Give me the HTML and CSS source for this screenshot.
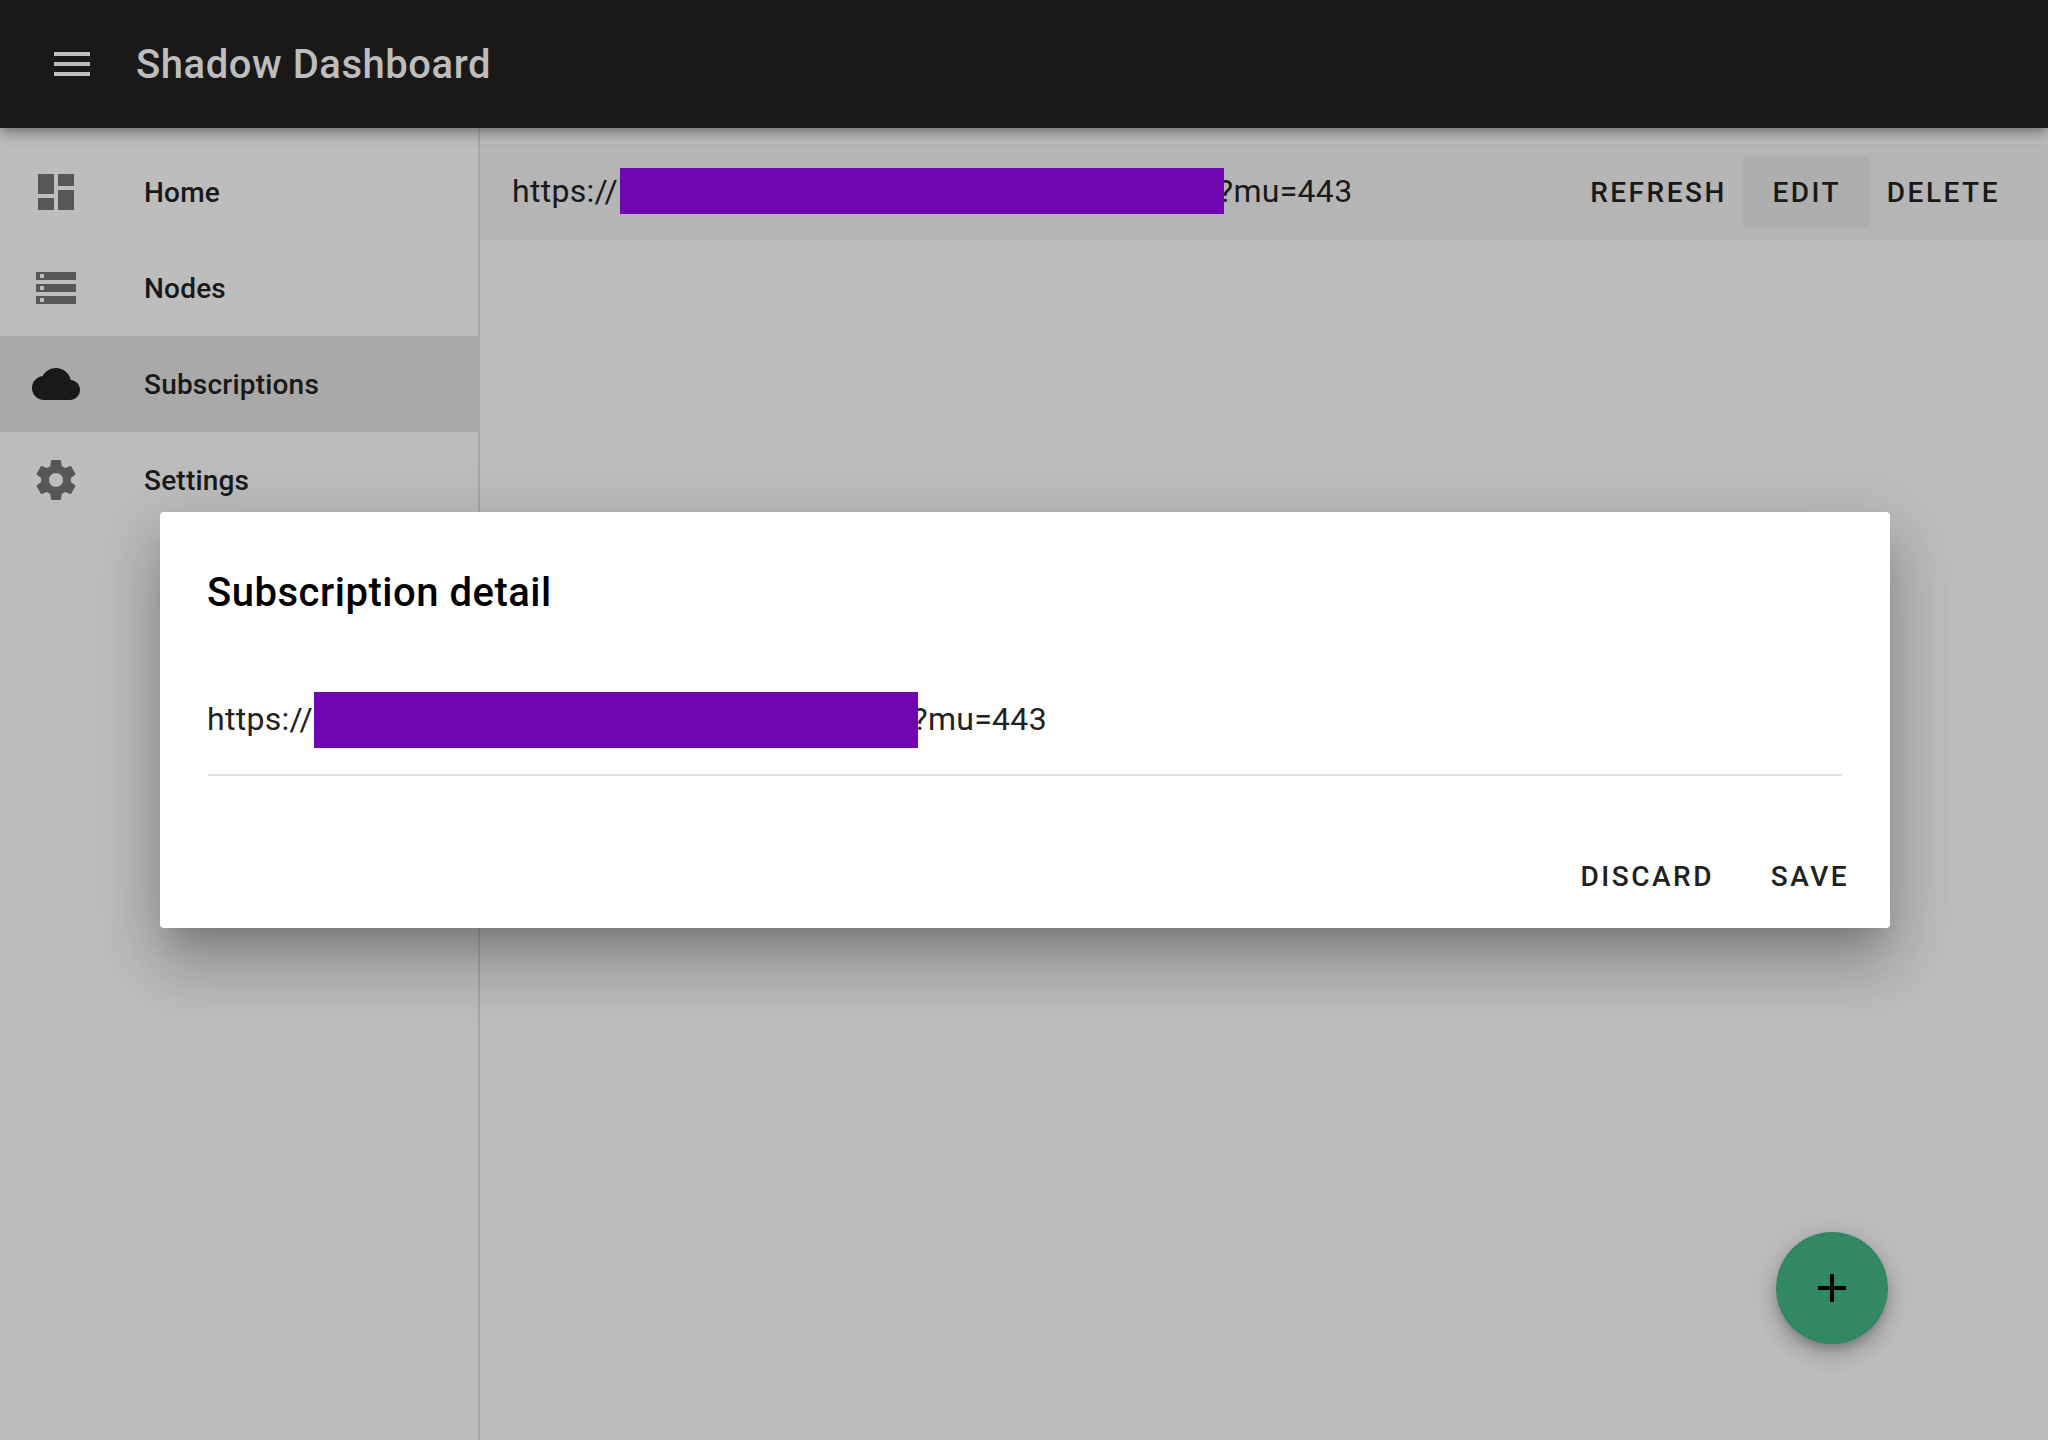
FILE: index.html
```html
<!DOCTYPE html>
<html lang="en">
<head>
<meta charset="utf-8">
<title>Shadow Dashboard</title>
<link rel="stylesheet" href="styles.css">
</head>
<body>
<header class="app-bar">
  <svg class="icon" viewBox="0 0 24 24"><path d="M3 18h18v-2H3v2zm0-5h18v-2H3v2zm0-7v2h18V6H3z"/></svg>
  <h1 class="app-title">Shadow Dashboard</h1>
</header>
<div class="shell">
  <nav class="drawer">
    <a class="nav-item"><svg class="icon" viewBox="0 0 24 24"><path d="M3 13h8V3H3v10zm0 8h8v-6H3v6zm10 0h8V11h-8v10zm0-18v6h8V3h-8z"/></svg><span>Home</span></a>
    <a class="nav-item"><svg class="icon" viewBox="0 0 24 24"><path d="M2 20h20v-4H2v4zm2-3h2v2H4v-2zM2 4v4h20V4H2zm4 3H4V5h2v2zm-4 7h20v-4H2v4zm2-3h2v2H4v-2z"/></svg><span>Nodes</span></a>
    <a class="nav-item active"><svg class="icon" viewBox="0 0 24 24"><path d="M19.35 10.04C18.67 6.59 15.64 4 12 4 9.11 4 6.6 5.64 5.35 8.04 2.34 8.36 0 10.91 0 14c0 3.31 2.69 6 6 6h13c2.76 0 5-2.24 5-5 0-2.64-2.05-4.78-4.65-4.96z"/></svg><span>Subscriptions</span></a>
    <a class="nav-item"><svg class="icon" viewBox="0 0 24 24"><path d="M19.43 12.98c.04-.32.07-.64.07-.98s-.03-.66-.07-.98l2.11-1.65c.19-.15.24-.42.12-.64l-2-3.46c-.12-.22-.39-.3-.61-.22l-2.49 1c-.52-.4-1.08-.73-1.69-.98l-.38-2.65C14.46 2.18 14.25 2 14 2h-4c-.25 0-.46.18-.49.42l-.38 2.65c-.61.25-1.17.59-1.69.98l-2.49-1c-.23-.09-.49 0-.61.22l-2 3.46c-.13.22-.07.49.12.64l2.11 1.65c-.04.32-.07.65-.07.98s.03.66.07.98l-2.11 1.65c-.19.15-.24.42-.12.64l2 3.46c.12.22.39.3.61.22l2.49-1c.52.4 1.08.73 1.69.98l.38 2.65c.03.24.24.42.49.42h4c.25 0 .46-.18.49-.42l.38-2.65c.61-.25 1.17-.59 1.69-.98l2.49 1c.23.09.49 0 .61-.22l2-3.46c.12-.22.07-.49-.12-.64l-2.11-1.65zM12 15.5c-1.93 0-3.5-1.57-3.5-3.5s1.57-3.5 3.5-3.5 3.5 1.57 3.5 3.5-1.57 3.5-3.5 3.5z"/></svg><span>Settings</span></a>
  </nav>
  <main class="content">
    <div class="row">
      <div class="url"><span class="scheme">https://</span><span class="mask"></span><span class="query">?mu=443</span></div>
      <div class="row-actions">
        <button class="btn">REFRESH</button>
        <button class="btn focused">EDIT</button>
        <button class="btn">DELETE</button>
      </div>
    </div>
  </main>
</div>
<button class="fab"><svg class="icon" viewBox="0 0 24 24"><path d="M19 13h-6v6h-2v-6H5v-2h6V5h2v6h6v2z"/></svg></button>
<div class="overlay">
  <section class="dialog">
    <h2 class="dialog-title">Subscription detail</h2>
    <div class="field">
      <div class="url"><span class="scheme">https://</span><span class="mask"></span><span class="query">?mu=443</span></div>
    </div>
    <footer class="dialog-actions">
      <button class="btn">DISCARD</button>
      <button class="btn">SAVE</button>
    </footer>
  </section>
</div>
</body>
</html>
```
FILE: styles.css
```css
* { box-sizing: border-box; }

body {
  margin: 0;
  height: 1440px;
  display: flex;
  flex-direction: column;
  overflow: hidden;
  background: #bdbdbd;
  color: #191919;
  font-family: Roboto, "Liberation Sans", sans-serif;
}

.icon { width: 48px; height: 48px; flex: none; fill: currentColor; display: block; }

.app-bar {
  position: relative;
  z-index: 1;
  flex: none;
  height: 128px;
  padding: 0 48px;
  display: flex;
  align-items: center;
  gap: 40px;
  background: #191919;
  color: #bdbdbd;
  box-shadow: 0 4px 8px -2px rgba(0,0,0,.2), 0 8px 10px 0 rgba(0,0,0,.14), 0 2px 20px 0 rgba(0,0,0,.12);
}

.app-title { margin: 0; padding-top: 2px; font-size: 40px; font-weight: 500; line-height: 64px; letter-spacing: .54px; }

.shell { flex: 1; display: flex; }

.drawer { width: 480px; flex: none; padding-top: 16px; border-right: 2px solid #a7a7a7; }

.nav-item {
  height: 96px;
  padding-left: 32px;
  display: flex;
  align-items: center;
  gap: 64px;
  font-size: 28px;
  font-weight: 500;
  letter-spacing: .2px;
}
.nav-item .icon { fill: #575757; }
.nav-item.active { background: #a9a9a9; }
.nav-item.active .icon { fill: #191919; }

.content { flex: 1; padding-top: 16px; }

.row {
  height: 96px;
  padding: 0 32px;
  display: flex;
  align-items: center;
  justify-content: space-between;
  background: #b5b5b5;
}
.row-actions { display: flex; }

.url { display: flex; align-items: center; font-size: 32px; line-height: 46px; letter-spacing: .3px; }
.scheme { width: 108px; }
.mask { position: relative; z-index: 1; width: 604px; height: 46px; background: #6f06b1; }
.query { margin-left: -6px; }
.row .url { margin-top: -2px; }

.btn {
  height: 72px;
  min-width: 128px;
  padding: 2px 16px 0;
  border: 0;
  border-radius: 4px;
  background: none;
  color: inherit;
  font: 500 28px/70px Roboto, "Liberation Sans", sans-serif;
  letter-spacing: 2.5px;
}
.btn.focused { background: #aeaeae; }
.row .btn { padding-left: 17px; padding-right: 15px; }
.row .btn:last-child { padding-right: 16px; }

.fab {
  position: absolute;
  right: 160px;
  bottom: 96px;
  width: 112px;
  height: 112px;
  padding: 32px;
  border: 0;
  border-radius: 50%;
  background: #318861;
  color: #000;
  box-shadow: 0 6px 10px -2px rgba(0,0,0,.2), 0 12px 20px 0 rgba(0,0,0,.14), 0 2px 36px 0 rgba(0,0,0,.12);
}

.overlay {
  position: absolute;
  inset: 0;
  z-index: 2;
  padding-left: 2px;
  display: flex;
  align-items: center;
  justify-content: center;
}

.dialog {
  width: 1730px;
  height: 416px;
  display: flex;
  flex-direction: column;
  background: #fff;
  color: #212121;
  border-radius: 4px;
  box-shadow: 0 22px 30px -14px rgba(0,0,0,.2), 0 42px 60px 4px rgba(0,0,0,.14), 0 16px 72px 12px rgba(0,0,0,.12);
}
.dialog-title { margin: 49px 47px 0; color: #000; font-size: 40px; font-weight: 500; line-height: 64px; letter-spacing: .52px; }

.field { margin: 67px 48px 0; height: 84px; border-bottom: 2px solid #e0e0e0; }
.dialog .url { margin-left: -1px; line-height: 54px; height: 56px; align-items: flex-start; }
.dialog .scheme { width: 107px; }
.dialog .mask { height: 56px; }
.dialog .query { margin-left: -5.5px; }

.dialog-actions { margin-top: auto; padding: 16px; display: flex; justify-content: flex-end; gap: 16px; }
```
